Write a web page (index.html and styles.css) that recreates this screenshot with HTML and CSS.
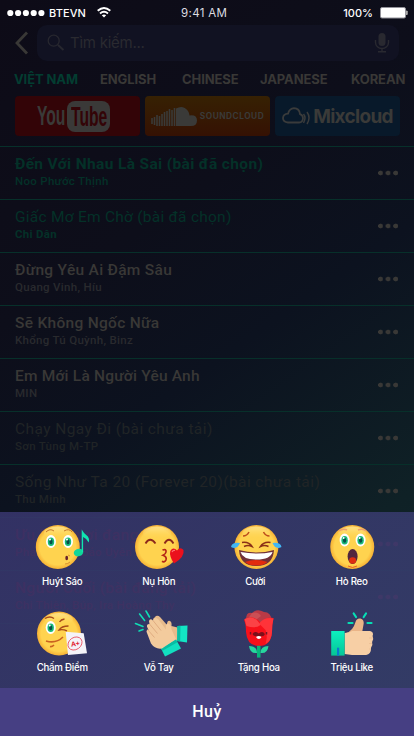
FILE: index.html
```html
<!DOCTYPE html>
<html lang="vi">
<head>
<meta charset="utf-8">
<title>Karaoke</title>
<link rel="stylesheet" href="styles.css">
</head>
<body>
<div class="app">
  <header class="status">
    <div class="carrier"><svg width="38" height="8" viewBox="0 0 38 8"><g fill="#fff"><circle cx="3.3" cy="4" r="3.1"/><circle cx="11.1" cy="4" r="3.1"/><circle cx="18.9" cy="4" r="3.1"/><circle cx="26.7" cy="4" r="3.1"/><circle cx="34.4" cy="4" r="3.1"/></g></svg><span class="net">BTEVN</span><svg class="wifi" width="14" height="11" viewBox="0 0 14 11" fill="none" stroke="#fff" stroke-width="1.9"><path d="M.7 3.8Q7-1.8 13.3 3.8M3 6.5Q7 3 11 6.5"/><path d="M7 10.5 4.8 8.3Q7 6.7 9.2 8.3Z" fill="#fff" stroke="none"/></svg></div>
    <div class="clock">9:41 AM</div>
    <div class="power"><span>100%</span><svg width="28" height="12" viewBox="0 0 28 12"><rect x=".5" y=".5" width="25" height="10.5" rx="1.5" fill="#fff" stroke="#92929a"/><path d="M26.2 4h1v3.5h-1z" fill="#ccc" stroke="#aaa"/></svg></div>
  </header>
  <div class="searchrow">
    <svg class="back" width="14" height="24" viewBox="0 0 14 24"><path d="M12 1.5 2 12l10 10.5" fill="none" stroke="#393836" stroke-width="2.8"/></svg>
    <div class="search">
      <svg width="18" height="18" viewBox="0 0 18 18" fill="none" stroke="#27272f" stroke-width="1.3"><circle cx="6.7" cy="6.7" r="5.5"/><path d="m11 11 5.5 5" stroke-width="2"/></svg>
      <span>Tìm kiếm...</span>
      <svg class="mic" width="16" height="20" viewBox="0 0 16 20"><rect x="4.5" y="0" width="7" height="13" rx="3.5" fill="#292930"/><path d="M1.500 7v2.500a6.500 6 0 0 0 13 0V7M8 15.500v3M4 18.700h8" fill="none" stroke="#292930" stroke-width="1.4"/></svg>
    </div>
  </div>
  <nav class="tabs"><span class="tab on">VIỆT NAM</span><span class="tab t2">ENGLISH</span><span class="tab t3">CHINESE</span><span class="tab t4">JAPANESE</span><span class="tab t5">KOREAN</span></nav>
  <div class="sources">
    <div class="src yt"><span class="you">You</span><span class="tube"><span>Tube</span></span></div>
    <div class="src sc"><svg width="47" height="21" viewBox="0 0 47 21"><path d="M25 20V2.5Q32-1.5 37 5q1.4 2 1.5 4.5Q46 8.500 46 14.500 46 20 40 20Z" fill="#3a3a38"/><path d="M1 12v6M3.500 11v8M6 9v11M8.500 10v10M11 8v12M13.500 6v14M16 5v15M18.500 3v17M21 4v16M23.500 2v18" stroke="#3a3a38" stroke-width="1.6"/></svg><span>SOUNDCLOUD</span></div>
    <div class="src mc"><svg width="30" height="18" viewBox="0 0 30 18" fill="none" stroke="#3a3b3b" stroke-width="1.8"><path d="M6 15.500Q1 15 1 11q.3-4 5-4.300Q7.500 1.500 12 1.200q5.500.2 6 6 3 1 3 4-.2 4-4 4.300Z"/><path d="M21.500 7q3 3.500 0 9M25 5q4 5.500 0 12" stroke-width="1.5"/></svg><span>Mixcloud</span></div>
  </div>
  <main class="list">
    <div class="row chosen"><div><p class="song s1">Đến Với Nhau Là Sai (bài đã chọn)</p><p class="artist">Noo Phước Thịnh</p></div><i class="more"></i></div>
    <div class="row chosen"><div><p class="song s2">Giấc Mơ Em Chờ (bài đã chọn)</p><p class="artist bold">Chi Dân</p></div><i class="more"></i></div>
    <div class="row"><div><p class="song">Đừng Yêu Ai Đậm Sâu</p><p class="artist">Quang Vinh, Híu</p></div><i class="more"></i></div>
    <div class="row"><div><p class="song">Sẽ Không Ngốc Nữa</p><p class="artist">Khổng Tú Quỳnh, Binz</p></div><i class="more"></i></div>
    <div class="row"><div><p class="song s5">Em Mới Là Người Yêu Anh</p><p class="artist">MIN</p></div><i class="more"></i></div>
    <div class="row absent"><div><p class="song s6">Chạy Ngay Đi (bài chưa tải)</p><p class="artist">Sơn Tùng M-TP</p></div><i class="more"></i></div>
    <div class="row absent"><div><p class="song s7">Sống Như Ta 20 (Forever 20)(bài chưa tải)</p><p class="artist">Thu Minh</p></div><i class="more"></i></div>
    <div class="row loading"><div><p class="song">Ưu Phiền ơi đang tải</p><p class="artist">Phạm Thuý, Bảo Uyên</p></div><i class="more"></i></div>
    <div class="row loading"><div><p class="song">Người Cuối (bài đang tải)</p><p class="artist">Chi Thiện, Búp, Ira Hoàng Thy</p></div><i class="more"></i></div>
    <div class="row loading"></div>
  </main>

  <section class="sheet">
    <svg width="0" height="0" class="defs"><defs>
      <radialGradient id="skin" cx=".5" cy=".5" r=".52"><stop offset=".78" stop-color="#ffd34f"/><stop offset="1" stop-color="#f4a92f"/></radialGradient>
      <linearGradient id="shine" x2="0" y2="1"><stop stop-color="#fff0ad"/><stop offset="1" stop-color="#ffd34f" stop-opacity="0"/></linearGradient>
      <linearGradient id="mint" x2="0" y2="1"><stop stop-color="#0cf0c0"/><stop offset="1" stop-color="#06c596"/></linearGradient>
      <g id="face"><circle r="22" fill="url(#skin)"/><ellipse cy="-14" rx="14" ry="6.500" fill="url(#shine)" opacity=".65"/></g>
      <g id="eye"><ellipse rx="5" ry="6.500" fill="#fff"/><ellipse cy=".3" rx="3.200" ry="4.300" fill="#19b97a"/><ellipse cy=".3" rx="1.600" ry="2.500" fill="#084f48"/><circle cx="-1" cy="-2" r="1" fill="#fff"/></g>
    </defs></svg>
    <div class="reactions">
      <div class="reaction"><svg viewBox="0 0 64 50"><use href="#face" x="27.800" y="25"/><use href="#eye" x="21" y="19.500"/><use href="#eye" x="38" y="19.500"/><path d="M16 10q4-4 8-1M34 9q5-3 8 1" fill="none" stroke="#c87928"/><ellipse cx="36.700" cy="36" rx="1.400" ry="2.200" fill="#67212b"/><path d="M35 42q3 0 5-2M38 33l2 1" fill="none" stroke="#d99231"/><ellipse cx="48.500" cy="30.500" rx="4.800" ry="3.700" fill="#10d69a" transform="rotate(-15 48.500 30.500)"/><path d="M51.700 30V7.500q2 3.500 4.500 5.500 4 3 2.500 7.500-2-4-5.600-5.500V30Z" fill="#10e5b0"/></svg><span>Huýt Sáo</span></div>
      <div class="reaction"><svg viewBox="0 0 64 50"><use href="#face" x="30" y="25"/><path d="M18.500 21.500q4.500-7.500 10 0M37.500 21.500q4.500-7.500 9 0" fill="none" stroke="#8c281b" stroke-width="1.800"/><path d="M35.500 28q4-1.500 3.500 2-.3 2-3 3.300 4 1.500 3 4.500-1.500 3.200-4 1.500" fill="none" stroke="#b52717" stroke-width="1.700"/><path d="M47 41.500Q42 34 43.300 29q3-4.500 6.700-.5 3.500-4 6.500-.5 1.500 7-9.500 13.500Z" fill="#eb101c"/><path d="M45 30q1-2 3-1.500" fill="none" stroke="#ff7170" stroke-width="1.200"/></svg><span>Nụ Hôn</span></div>
      <div class="reaction"><svg viewBox="0 0 64 50"><use href="#face" x="33.400" y="25"/><path d="M20 14q4 0 6-4M40.500 10q2 4 6 4" fill="none" stroke="#bd4d1c" stroke-width="1.500"/><path d="M19 20.500q7-1 10 4-4-2-8 0M47.500 20.500q-7-1-10 4 4-2 8 0" fill="none" stroke="#8b3017" stroke-width="1.500"/><path d="M16 28q17 5 35 0-1 16-17.500 16Q17 44 16 28Z" fill="#713039"/><path d="M17.500 30q16 3 32 0-2 7.500-16 7.500T17.500 30Z" fill="#fff"/><path d="M22 40q11-4 22.500 0-4 3.600-11 3.600T22 40Z" fill="#e22b0e"/><path d="M17 21q-8-1-9 4 6 3 9-4ZM49.500 21q8-1 9 4-6 3-9-4Z" fill="#42b7f4"/></svg><span>Cười</span></div>
      <div class="reaction"><svg viewBox="0 0 64 50"><use href="#face" x="32.250" y="25"/><use href="#eye" x="24.600" y="18"/><use href="#eye" x="40.600" y="18"/><path d="M19 9q4-3 8-1M38 8q5-2 8 1" fill="none" stroke="#efa16b" stroke-width="1.500"/><ellipse cx="32.600" cy="34.500" rx="5" ry="7.500" fill="#51253e"/><ellipse cx="32.600" cy="38.500" rx="3.500" ry="3.200" fill="#dd2d10"/><path d="M28 44q4.600 3 9 0" fill="none" stroke="#e8602a"/></svg><span>Hò Reo</span></div>
      <div class="reaction"><svg viewBox="0 0 64 50"><use href="#face" x="29" y="24.500"/><use href="#eye" x="20.700" y="18.500"/><path d="M15 9.500q5-3 9 0M29.500 13q1.500-2.500 5-3M38.500 17q-7 0-9.500 4 4-1 8 1" fill="none" stroke="#a94b19" stroke-width="1.400"/><path d="M16 32q10 3 17-4M20 37.500q2 .5 4-1.500" fill="none" stroke="#ca6221" stroke-width="1.600"/><path d="m35.700 22.700 18 1.600L57 44.300 38 46Z" fill="#f4f3f8"/><ellipse cx="45" cy="34.500" rx="7.500" ry="6" fill="none" stroke="#e84a58" stroke-width=".8" transform="rotate(-35 45 34.500)"/><text x="40.800" y="37.200" class="grade" transform="rotate(-8 45 35)">A+</text></svg><span>Chấm Điểm</span></div>
      <div class="reaction"><svg viewBox="0 0 64 50"><path d="m8.500 14.500 7.500 3M12.600 5l5 6.500M19 2l3.500 6M12 22l4-1.500" stroke="#10dbb4" stroke-width="1.600" stroke-linecap="round"/><path d="m26 10 3-3q2-1 4 1l7 8q0-5 3-4 2 1 1.500 5l6 1.500 1 12-10 7L32 22Z" fill="#e6ba8b"/><path d="M50.500 17 60.500 16.500l-.5 17-10-1.500Z" fill="#13e5c4"/><path d="m50.500 17 3-.2-.3 15.700-3.200-.5Z" fill="#08bda4"/><path d="m34 39.500 15-9 5 9L38 47.500Z" fill="#12dfc0"/><path d="m34 39.500 15-9 1.500 2.700-15 8.600Z" fill="#08bda4"/><path d="M20 24q-1.500-3 1.500-3.200l-1.500-3q-.5-3 2.500-2.800l-.5-3q1-3 4-.5l1-2q2.500-1.500 4.500 1l7.500 10q-1-6 2-6 3 .5 3.500 6l4.500 9.500-14 9.500q-7 1-11-5Z" fill="#f3cb9d"/><path d="m22.500 15 8 9.500M20.500 20.500l7 8M26 11.500l8 10" stroke="#dca87d" stroke-width=".9" fill="none"/></svg><span>Vỗ Tay</span></div>
      <div class="reaction"><svg viewBox="0 0 64 50"><path d="M23 11q0-9 6-7 5-5 12-1 7 0 8 9l-6 8H27Z" fill="#b93a46"/><path d="M29 4q6-2 9 3l-8 6-6-2Z" fill="#ca4f55"/><path d="M21 11q2-3 8-2.500 6 1 9 5.500 4-6 12.500-5Q49 15 49 23q-1 14-13 14T23 23q0-8-2-12Z" fill="#f7101a"/><path d="M50.500 9.500Q42 7.500 36 14.500l6.500 6.500q2.500 6 0 14 6-3 6.500-12 0-8 1.500-13.500Z" fill="#ff3339"/><path d="M21.500 10q10-5 16 6-5 4-14 1Z" fill="#fb4246"/><path d="M27.500 23v2.500M43.500 23v2.500" stroke="#741927" stroke-width="1.500"/><path d="M29.500 25q2-3.500 6.300-.5 4-3 6 .5 0 2.500-6 2.500t-6.300-2.500Z" fill="#7c101b"/><path d="M33 28q2.500-2 5.500 0-1 2-2.700 2T33 28Z" fill="#fff"/><path d="M34 36.800h3.500v11.800H34Z" fill="#07b67b"/><path d="M34 44q-7 1-8-7 8 0 8 7ZM37.500 44q7 1 8-7-8 0-8 7Z" fill="#26d79e"/></svg><span class="rose">Tặng Hoa</span></div>
      <div class="reaction"><svg viewBox="0 0 64 50"><path d="M28.500 14h4M33.700 4.500 36 8M46 4.500 43.700 8M47.500 14h4" stroke="#06dfb5" stroke-width="2.200" stroke-linecap="round"/><path d="M26 24q7-2 9.500-11 1-4 5-3.500 3.500 1 3.200 5L42 24l-10 5Z" fill="#eab487"/><path d="M24.600 24q5 0 7.500-2h18q4 1 2.500 5 1.500 3-.5 6 1 3-1 5.500 0 7-5 7.500H32l-7.400-1Z" fill="#f7cfa5"/><path d="M49 29h4M49 34.500h3M49 40h2" stroke="#e8b98d" stroke-width=".6"/><path d="M11.200 22h13.400v24.600H11.200Z" fill="url(#mint)"/><path d="M17 38.700h2.200v7.900H17Z" fill="#087cce"/></svg><span>Triệu Like</span></div>
    </div>
    <button class="cancel">Huỷ</button>
  </section>
</div>
</body>
</html>
```
FILE: styles.css
```css
* { box-sizing: border-box; }
body { margin: 0; font-family: Inter, Roboto, sans-serif; }
p { margin: 0; }
.app { position: relative; width: 414px; height: 736px; overflow: hidden; background: linear-gradient(145deg, #0d0b17 0%, #0d0e1a 32%, #0c121f 50%, #0f2126 76%, #10282c 100%); }
.status { display: grid; grid-template-columns: 174px auto 1fr; align-items: center; height: 25px; padding: 0 6px 0 7px; color: #fff; font-size: 11px; line-height: 14px; }
.carrier, .power { display: flex; align-items: center; }
.net { margin-left: 4px; letter-spacing: .1px; font-weight: 500; }
.wifi { margin-left: 11px; }
.clock { font-size: 11.500px; letter-spacing: .35px; color: #dcdce0; }
.power { justify-content: flex-end; gap: 7px; font-weight: 500; }
.searchrow { display: flex; align-items: center; height: 36px; padding: 0 15px; gap: 8px; }
.search { display: flex; align-items: center; flex: 1; height: 36px; padding: 0 9px 0 10px; border-radius: 10px; background: #111222; color: #2a2a30; font-size: 15px; letter-spacing: -.25px; }
.search span { margin-left: 5px; margin-top: -1px; }
.mic { margin-left: auto; }
.tabs { display: flex; height: 35px; padding-left: 14px; align-items: center; color: #393836; font-size: 13px; font-weight: 700; white-space: nowrap; }
.tab { flex: none; width: 86px; letter-spacing: -.1px; }
.tab.on { color: #033d31; }
.t2 { width: 82px; }
.t3 { width: 78px; }
.t4 { width: 91px; }
.t5 { width: 58px; }
.sources { display: flex; gap: 5px; padding: 0 14px 0 15px; }
.src { display: flex; align-items: center; justify-content: center; flex: none; width: 125px; height: 40px; border-radius: 4px; color: #3a3a38; overflow: hidden; }
.yt { justify-content: flex-start; padding-left: 22px; background: #330407; font-size: 27px; line-height: 31px; }
.you, .tube span { display: inline-block; font-family: "Liberation Sans", sans-serif; font-weight: 700; transform: scaleX(.58); transform-origin: left center; }
.you { flex: none; width: 30px; }
.tube { flex: none; width: 43px; height: 31px; padding-left: 4px; border-radius: 8px; background: #3a3938; color: #330407; }
.sc { background: linear-gradient(#362103, #351103); font-size: 8.300px; font-weight: 700; letter-spacing: .5px; gap: 2px; }
.mc { background: #08192a; font-size: 19px; font-weight: 700; letter-spacing: -.7px; gap: 1px; }
.list { margin-top: 10px; }
.row { display: flex; justify-content: space-between; height: 53px; padding: 6.500px 15px 0; border-top: 1px solid #07302a; color: #393836; }
.song, .artist { font-family: Roboto, sans-serif; white-space: nowrap; width: max-content; }
.song { font-size: 15.500px; line-height: 20px; letter-spacing: .3px; font-weight: 500; }
.artist { font-size: 11.500px; line-height: 15px; letter-spacing: .3px; color: #292a2e; font-weight: 500; }
.chosen, .chosen .artist { color: #043128; }
.s1, .artist.bold { font-weight: 700; }
.s1 { letter-spacing: .35px; }
.s2 { font-weight: 400; letter-spacing: .25px; }
.s5 { letter-spacing: .2px; }
.s6, .s7 { font-weight: 400; letter-spacing: .41px; }
.absent, .absent .artist { color: #202426; }
.loading, .loading .artist { color: #600010; }
.more { width: 21px; height: 6px; margin-top: 16.500px; background: radial-gradient(circle at 2.500px 3px, #393836 2.100px, transparent 2.700px) 0 0 / 7.600px 6px; }
.loading .more { background-image: radial-gradient(circle at 2.500px 3px, #6c1c3c 2.100px, transparent 2.700px); }
.sheet { position: absolute; left: 0; right: 0; bottom: 0; height: 224px; background: linear-gradient(145deg, rgba(56, 54, 110, .87), rgba(56, 63, 110, .87)); }
.defs { position: absolute; }
.reactions { display: grid; grid-template-columns: repeat(4, 96.500px); grid-template-rows: 86.500px 86px; height: 176px; padding: 10px 14px 0; }
.reaction { display: flex; flex-direction: column; align-items: center; color: #fff; font-size: 9.700px; line-height: 14px; font-weight: 500; letter-spacing: -.25px; }
.reaction svg { width: 64px; height: 50px; margin-bottom: 3px; flex: none; }
.reaction:nth-child(n+5) svg { margin-bottom: 2px; }
.rose { margin-left: 7px; }
.grade { font: 700 7px "Liberation Sans", sans-serif; fill: #e2182b; }
.cancel { display: block; width: 100%; height: 48px; padding: 0 0 2px; border: 0; background: #463f83; color: #fff; font: 500 16px Roboto, sans-serif; letter-spacing: .5px; }
```
